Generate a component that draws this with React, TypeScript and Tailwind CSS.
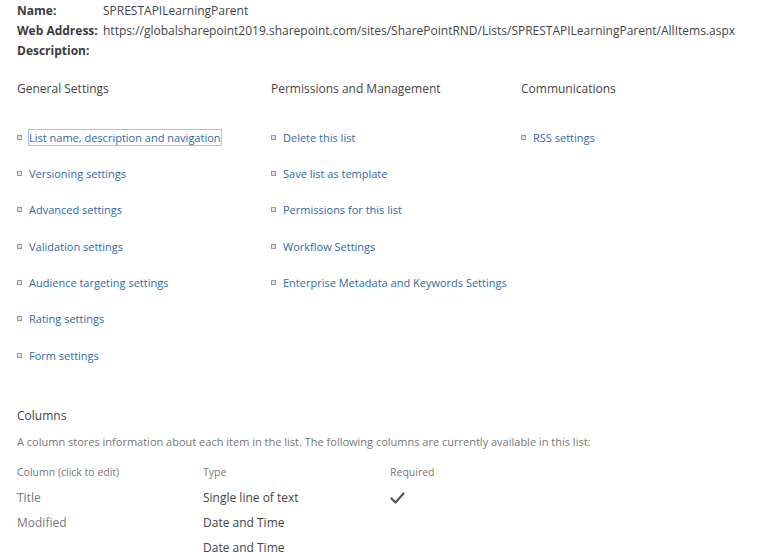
import React from "react";

const general = [
  "List name, description and navigation",
  "Versioning settings",
  "Advanced settings",
  "Validation settings",
  "Audience targeting settings",
  "Rating settings",
  "Form settings",
];

const permissions = [
  "Delete this list",
  "Save list as template",
  "Permissions for this list",
  "Workflow Settings",
  "Enterprise Metadata and Keywords Settings",
];

const communications = ["RSS settings"];

const columns = [
  { name: "Title", type: "Single line of text", required: true },
  { name: "Modified", type: "Date and Time", required: false },
  { name: "", type: "Date and Time", required: false },
];

function LinkItem({ label, focused }: { label: string; focused?: boolean }) {
  return (
    <li className="flex h-[36.33px] items-center whitespace-nowrap">
      <span className="mr-[7px] h-[5px] w-[5px] shrink-0 border border-[#9a9a9a] bg-[#e6e6e6]" />
      <a
        href="#"
        className={
          focused
            ? "-ml-px border border-[#a4c6e6] leading-[15px] text-[#2f6aa3]"
            : "leading-[15px] text-[#2f6aa3]"
        }
      >
        {label}
      </a>
    </li>
  );
}

function SettingsGroup({
  title,
  items,
  className,
}: {
  title: string;
  items: string[];
  className?: string;
}) {
  return (
    <div className={className}>
      <h3 className="h-5 text-[12px] leading-5 text-[#444]">{title}</h3>
      <ul className="mt-5 text-[11px]">
        {items.map((item, i) => (
          <LinkItem key={item} label={item} focused={title === "General Settings" && i === 0} />
        ))}
      </ul>
    </div>
  );
}

export default function App() {
  return (
    <div
      className="min-h-[553px] w-[768px] bg-white pl-[17px] pt-px text-[#444]"
      style={{ fontFamily: '"Open Sans", "Noto Sans", sans-serif' }}
    >
      {/* List info */}
      <table className="whitespace-nowrap text-[12px] leading-5">
        <tbody>
          <tr>
            <td className="w-[86px] font-bold text-[#3b3b3b]">Name:</td>
            <td>SPRESTAPILearningParent</td>
          </tr>
          <tr>
            <td className="font-bold text-[#3b3b3b]">Web Address:</td>
            <td>
              https://globalsharepoint2019.sharepoint.com/sites/SharePointRND/Lists/SPRESTAPILearningParent/AllItems.aspx
            </td>
          </tr>
          <tr>
            <td className="font-bold text-[#3b3b3b]">Description:</td>
            <td />
          </tr>
        </tbody>
      </table>

      {/* Settings groups */}
      <div className="mt-[18px] flex">
        <SettingsGroup title="General Settings" items={general} className="w-[254px]" />
        <SettingsGroup title="Permissions and Management" items={permissions} className="w-[250px]" />
        <SettingsGroup title="Communications" items={communications} />
      </div>

      {/* Columns */}
      <h3 className="mt-[33px] h-5 text-[12px] leading-5 text-[#444]">Columns</h3>
      <p className="mt-[6px] h-5 whitespace-nowrap text-[11px] leading-5 text-[#777]">
        A column stores information about each item in the list. The following columns are currently available in this list:
      </p>
      <div className="mt-2 grid grid-cols-[186px_187px_1fr]">
        <div className="h-[25px] text-[10.5px] leading-[25px] text-[#7a7a7a]">Column (click to edit)</div>
        <div className="h-[25px] text-[10.5px] leading-[25px] text-[#7a7a7a]">Type</div>
        <div className="h-[25px] text-[10.5px] leading-[25px] text-[#7a7a7a]">Required</div>
        {columns.map((col, i) => (
          <React.Fragment key={i}>
            <div className="h-[25px] text-[12px] leading-[25px] text-[#777]">{col.name}</div>
            <div className="h-[25px] text-[12px] leading-[25px] text-[#444]">{col.type}</div>
            <div className="flex h-[25px] items-center text-[#555]">
              {col.required && (
                <svg width="15" height="12" viewBox="0 0 15 12" fill="none">
                  <path d="M1.5 6.5 L5.5 10.5 L13.5 1.5" stroke="#555" strokeWidth="2.2" strokeLinecap="round" strokeLinejoin="round" />
                </svg>
              )}
            </div>
          </React.Fragment>
        ))}
      </div>
    </div>
  );
}
